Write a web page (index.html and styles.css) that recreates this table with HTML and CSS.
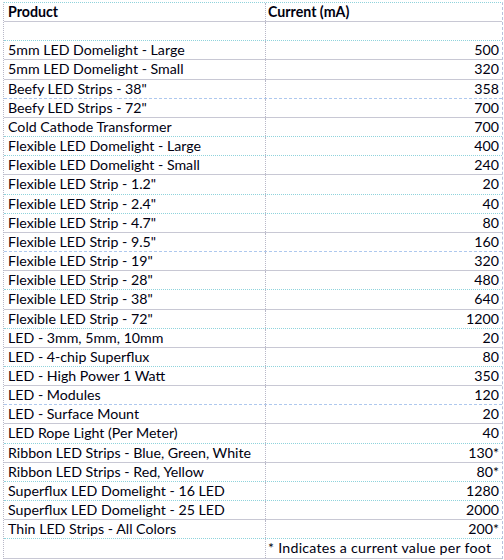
FILE: index.html
```html
<!DOCTYPE html>
<html>
<head>
<meta charset="utf-8">
<link rel="stylesheet" href="styles.css">
</head>
<body>
<div class="sheet">
  <div class="row head l-solid"><div class="c1">Product</div><div class="c2 left">Current (mA)</div></div>
  <div class="row l-dot"><div class="c1"></div><div class="c2"></div></div>
  <div class="row l-solid"><div class="c1">5mm LED Domelight - Large</div><div class="c2">500</div></div>
  <div class="row l-solid"><div class="c1">5mm LED Domelight - Small</div><div class="c2">320</div></div>
  <div class="row l-dash"><div class="c1">Beefy LED Strips - 38"</div><div class="c2">358</div></div>
  <div class="row l-solid"><div class="c1">Beefy LED Strips - 72"</div><div class="c2">700</div></div>
  <div class="row l-dot"><div class="c1">Cold Cathode Transformer</div><div class="c2">700</div></div>
  <div class="row l-dot"><div class="c1">Flexible LED Domelight - Large</div><div class="c2">400</div></div>
  <div class="row l-solid"><div class="c1">Flexible LED Domelight - Small</div><div class="c2">240</div></div>
  <div class="row l-dot"><div class="c1">Flexible LED Strip - 1.2"</div><div class="c2">20</div></div>
  <div class="row l-dot"><div class="c1">Flexible LED Strip - 2.4"</div><div class="c2">40</div></div>
  <div class="row l-solid"><div class="c1">Flexible LED Strip - 4.7"</div><div class="c2">80</div></div>
  <div class="row l-dash"><div class="c1">Flexible LED Strip - 9.5"</div><div class="c2">160</div></div>
  <div class="row l-solid"><div class="c1">Flexible LED Strip - 19"</div><div class="c2">320</div></div>
  <div class="row l-dot"><div class="c1">Flexible LED Strip - 28"</div><div class="c2">480</div></div>
  <div class="row l-solid"><div class="c1">Flexible LED Strip - 38"</div><div class="c2">640</div></div>
  <div class="row l-dot"><div class="c1">Flexible LED Strip - 72"</div><div class="c2">1200</div></div>
  <div class="row l-solid"><div class="c1">LED - 3mm, 5mm, 10mm</div><div class="c2">20</div></div>
  <div class="row l-dot"><div class="c1">LED - 4-chip Superflux</div><div class="c2">80</div></div>
  <div class="row l-solid"><div class="c1">LED - High Power 1 Watt</div><div class="c2">350</div></div>
  <div class="row l-dash"><div class="c1">LED - Modules</div><div class="c2">120</div></div>
  <div class="row l-solid"><div class="c1">LED - Surface Mount</div><div class="c2">20</div></div>
  <div class="row l-dot"><div class="c1">LED Rope Light (Per Meter)</div><div class="c2">40</div></div>
  <div class="row l-solid"><div class="c1">Ribbon LED Strips - Blue, Green, White</div><div class="c2">130*</div></div>
  <div class="row l-dot"><div class="c1">Ribbon LED Strips - Red, Yellow</div><div class="c2">80*</div></div>
  <div class="row l-dot"><div class="c1">Superflux LED Domelight - 16 LED</div><div class="c2">1280</div></div>
  <div class="row l-solid"><div class="c1">Superflux LED Domelight - 25 LED</div><div class="c2">2000</div></div>
  <div class="row l-dot"><div class="c1">Thin LED Strips - All Colors</div><div class="c2">200*</div></div>
  <div class="row l-solid"><div class="c1"></div><div class="c2 left note">* Indicates a current value per foot</div></div>
</div>
</body>
</html>
```

FILE: styles.css
```css
html, body {
  margin: 0;
  padding: 0;
  background: #ffffff;
}
.sheet {
  margin: 2px 0 0 3px;
  width: 498px;
  border-top: 1px dotted #8fd3dc;
  border-left: 1px dotted #b8b8c8;
  border-right: 1px dashed #b8c0dc;
  font-family: Lato, "Open Sans", sans-serif;
  font-size: 14.2px;
  color: #000010;
}
.row {
  display: grid;
  grid-template-columns: 261px 1fr;
  height: 19.17px;
  box-sizing: border-box;
  line-height: 18px;
}
.l-solid { border-bottom: 1px solid #c8c8d4; }
.l-dot { border-bottom: 1px dotted #8fd3dc; }
.l-dash { border-bottom: 1px dashed #aec8ee; }
.c1 {
  padding-left: 4px;
  white-space: nowrap;
}
.c2 {
  border-left: 1px dotted #b8b8c8;
  text-align: right;
  padding-right: 3px;
  white-space: nowrap;
}
.c2.left {
  text-align: left;
  padding-left: 2px;
}
.note {
  letter-spacing: 0.25px;
}
.head {
  font-weight: bold;
}
```
